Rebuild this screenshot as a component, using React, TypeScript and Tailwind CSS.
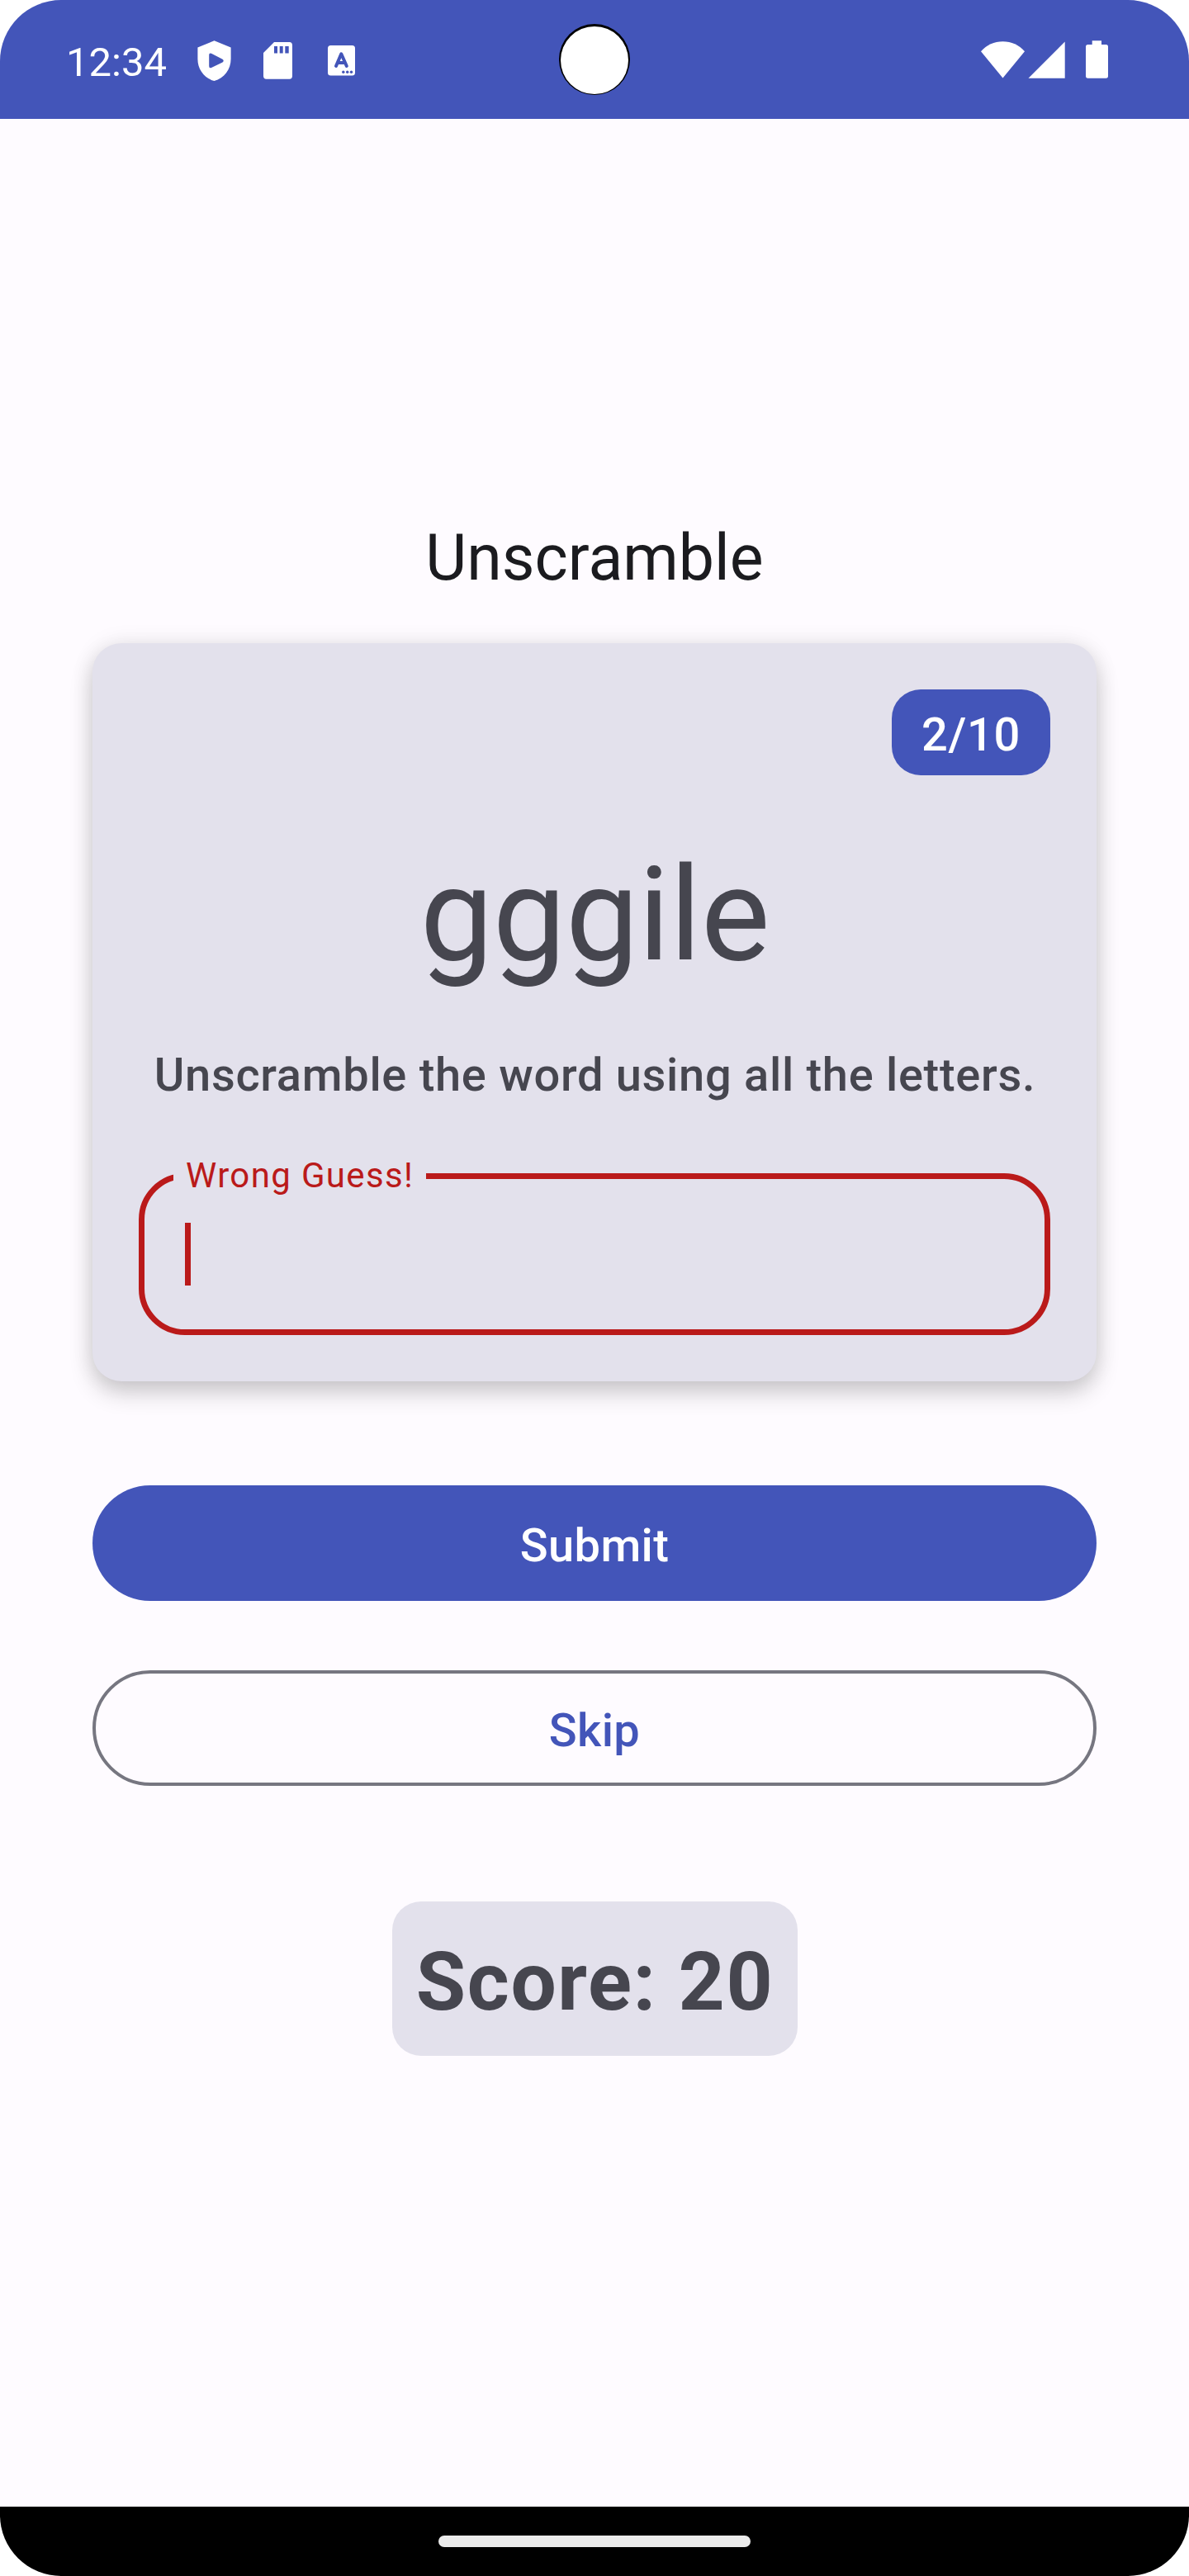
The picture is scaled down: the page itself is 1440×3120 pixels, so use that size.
import type { ReactNode } from "react";

function ShieldIcon() {
  return (
    <svg width="41" height="50" viewBox="0 0 41 50">
      <path
        fill="white"
        fillRule="evenodd"
        d="M20.5 0.3 40.6 8.6V22.5C40.6 35 32.5 46 20.5 49 8.5 46 0.4 35 0.4 22.5V8.6ZM14.2 17.5V31Q14.2 34.2 17 33L30.5 26.4Q33 24.8 30.5 22.8L17 15.7Q14.2 14.6 14.2 17.5Z"
      />
    </svg>
  );
}

function SdCardIcon() {
  return (
    <svg width="35" height="45" viewBox="0 0 35 45">
      <path
        fill="white"
        fillRule="evenodd"
        d="M13 0H31.5Q35 0 35 4V41Q35 44.7 31.5 44.7H3.5Q0 44.7 0 41V13ZM13 5V13.5H17V5ZM19.7 5V13.5H23.7V5ZM26.3 5V13.5H30.7V5Z"
      />
    </svg>
  );
}

function KeyboardLanguageIcon() {
  return (
    <svg width="33" height="37" viewBox="0 0 33 37">
      <rect width="33" height="36.5" rx="3.5" fill="white" />
      <path
        d="M10 25 16.3 10.3 22.8 25M12.3 21H20.5"
        fill="none"
        stroke="#4355B9"
        strokeWidth="4"
        strokeLinecap="round"
        strokeLinejoin="round"
      />
      <g fill="#4355B9">
        <circle cx="18.8" cy="32.3" r="1.7" />
        <circle cx="23.7" cy="32.3" r="1.7" />
        <circle cx="28.5" cy="32.3" r="1.7" />
      </g>
    </svg>
  );
}

function WifiIcon() {
  return (
    <svg width="53" height="45" viewBox="0 0 53 45">
      <path fill="white" d="M26.5 44.5 0 12.2C7 4.5 16 0.3 26.5 0.3S46 4.5 53 12.2Z" />
    </svg>
  );
}

function SignalIcon() {
  return (
    <svg width="45" height="45" viewBox="0 0 45 45">
      <path fill="white" d="M44.7 0.5V44.7H0.5Z" />
    </svg>
  );
}

function BatteryIcon() {
  return (
    <svg width="27" height="46" viewBox="0 0 27 46">
      <path
        fill="white"
        d="M7.7 0.3H19V5H24.5Q27 5 27 7.7V43Q27 45.7 24.5 45.7H2.5Q0 45.7 0 43V7.7Q0 5 2.5 5H7.7Z"
      />
    </svg>
  );
}

function StatusBar() {
  return (
    <header className="relative flex h-36 items-center justify-between bg-[#4355B9] pr-[98px] pl-[80px] text-white">
      <div className="flex items-center pt-[3px]">
        <span className="w-[159px] pt-[4px] text-[49px] leading-[56px]">12:34</span>
        <ShieldIcon />
        <div className="ml-[39px]">
          <SdCardIcon />
        </div>
        <div className="ml-[43px]">
          <KeyboardLanguageIcon />
        </div>
      </div>
      <div className="absolute top-[29px] left-[677px] size-[86px] rounded-full bg-black px-[2px] pt-[3px]">
        <div className="size-[82px] rounded-full bg-white" />
      </div>
      <div className="flex items-center">
        <div className="mt-px">
          <WifiIcon />
        </div>
        <div className="mt-px ml-[4px]">
          <SignalIcon />
        </div>
        <div className="ml-[25px]">
          <BatteryIcon />
        </div>
      </div>
    </header>
  );
}

function GuessField({ label }: { label: string }) {
  return (
    <div className="relative mt-[77px] h-[196px] w-full rounded-[56px] border-[7px] border-[#BA1A1A] pt-[53px] pl-[49px]">
      <span className="absolute top-[-32px] left-[35px] w-[306px] bg-[#E3E1EC] pl-[15px] text-[42px] leading-[56px] tracking-[1.35px] whitespace-nowrap text-[#BA1A1A]">
        {label}
      </span>
      <div className="h-[76px] w-[7px] bg-[#BA1A1A]" />
    </div>
  );
}

function GameCard() {
  return (
    <section className="mt-[54px] flex w-full flex-col items-center rounded-[35px] bg-[#E3E1EC] p-14 text-[#46464F] shadow-[0_14px_28px_rgba(0,0,0,0.19),0_0_28px_rgba(0,0,0,0.08)]">
      <span className="flex h-[104px] w-[192px] justify-center self-end rounded-[35px] bg-[#4355B9] pt-[13px] text-[56px] leading-[84px] font-medium tracking-[0.7px] text-white">
        2/10
      </span>
      <p className="mt-[78px] pl-px text-[157.5px] leading-[182px] tracking-[-0.3px]">gggile</p>
      <p className="mt-[61px] pl-px text-[56px] leading-[84px] font-medium tracking-[0.7px] whitespace-nowrap">
        Unscramble the word using all the letters.
      </p>
      <GuessField label="Wrong Guess!" />
    </section>
  );
}

function PillButton({ outlined, children }: { outlined?: boolean; children: ReactNode }) {
  const look = outlined
    ? "mt-[84px] border-4 border-[#767680] text-[#4355B9]"
    : "mt-[126px] bg-[#4355B9] text-white";
  return (
    <button
      className={`flex h-[140px] w-full items-center justify-center rounded-full pt-[6px] text-[56px] leading-[70px] font-medium tracking-[0.35px] ${look}`}
    >
      {children}
    </button>
  );
}

export default function App() {
  return (
    <div className="bg-white">
      <div className="flex h-[3120px] w-[1440px] flex-col overflow-hidden rounded-[74px] bg-[#FEFBFF] font-['Roboto',sans-serif]">
        <StatusBar />
        <main className="flex flex-1 flex-col items-center px-28 pt-[483px]">
          <h1 className="text-[77px] leading-[98px] text-[#1B1B1F]">Unscramble</h1>
          <GameCard />
          <PillButton>Submit</PillButton>
          <PillButton outlined>Skip</PillButton>
          <div className="mt-[140px] flex h-[187px] w-[491px] items-center justify-center rounded-[35px] bg-[#E3E1EC] pt-[8px] pl-px text-[98px] leading-[126px] font-bold tracking-[1.6px] whitespace-nowrap text-[#46464F]">
            Score: 20
          </div>
        </main>
        <footer className="flex h-[84px] items-center justify-center bg-black">
          <div className="h-[14px] w-[378px] rounded-full bg-[#EBEBEB]" />
        </footer>
      </div>
    </div>
  );
}
